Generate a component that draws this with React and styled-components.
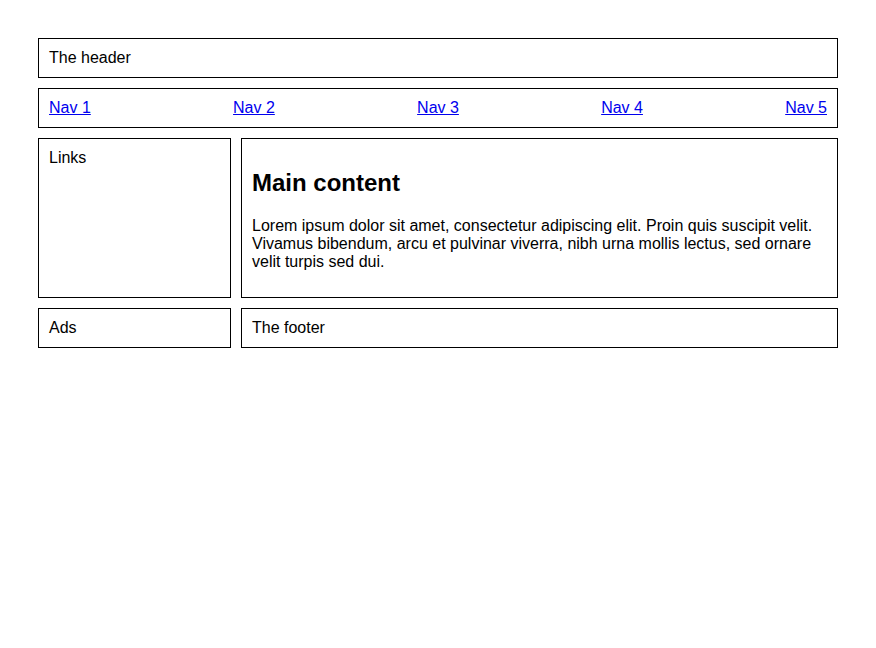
import React from "react";
import styled, { createGlobalStyle } from "styled-components";

const GlobalStyle = createGlobalStyle`
  body {
    margin: 8px;
    font-family: "Liberation Sans", Arial, sans-serif;
    font-size: 16px;
    color: #000;
    background: #fff;
  }
`;

const Page = styled.div`
  margin: 30px;
  display: grid;
  grid-template-columns: 193px 1fr;
  gap: 10px;
`;

const Box = styled.div`
  border: 1px solid #000;
  padding: 10px;
  grid-column: ${(p) => (p.wide ? "1 / -1" : "auto")};
`;

const Nav = styled(Box)`
  display: flex;
  justify-content: space-between;

  a {
    color: #0000ee;
    text-decoration: underline;
  }
`;

const Main = styled(Box)`
  min-height: 138px;

  h2 {
    font-size: 24px;
    font-weight: bold;
    margin: 0.83em 0;
  }

  p {
    margin: 16px 0;
  }
`;

const links = ["Nav 1", "Nav 2", "Nav 3", "Nav 4", "Nav 5"];

function App() {
  return (
    <>
      <GlobalStyle />
      <Page>
        <Box wide>The header</Box>
        <Nav wide>
          {links.map((l) => (
            <a key={l} href="#">
              {l}
            </a>
          ))}
        </Nav>
        <Box>Links</Box>
        <Main>
          <h2>Main content</h2>
          <p>
            Lorem ipsum dolor sit amet, consectetur adipiscing elit. Proin quis
            suscipit velit. Vivamus bibendum, arcu et pulvinar viverra, nibh
            urna mollis lectus, sed ornare velit turpis sed dui.
          </p>
        </Main>
        <Box>Ads</Box>
        <Box>The footer</Box>
      </Page>
    </>
  );
}

export default App;
